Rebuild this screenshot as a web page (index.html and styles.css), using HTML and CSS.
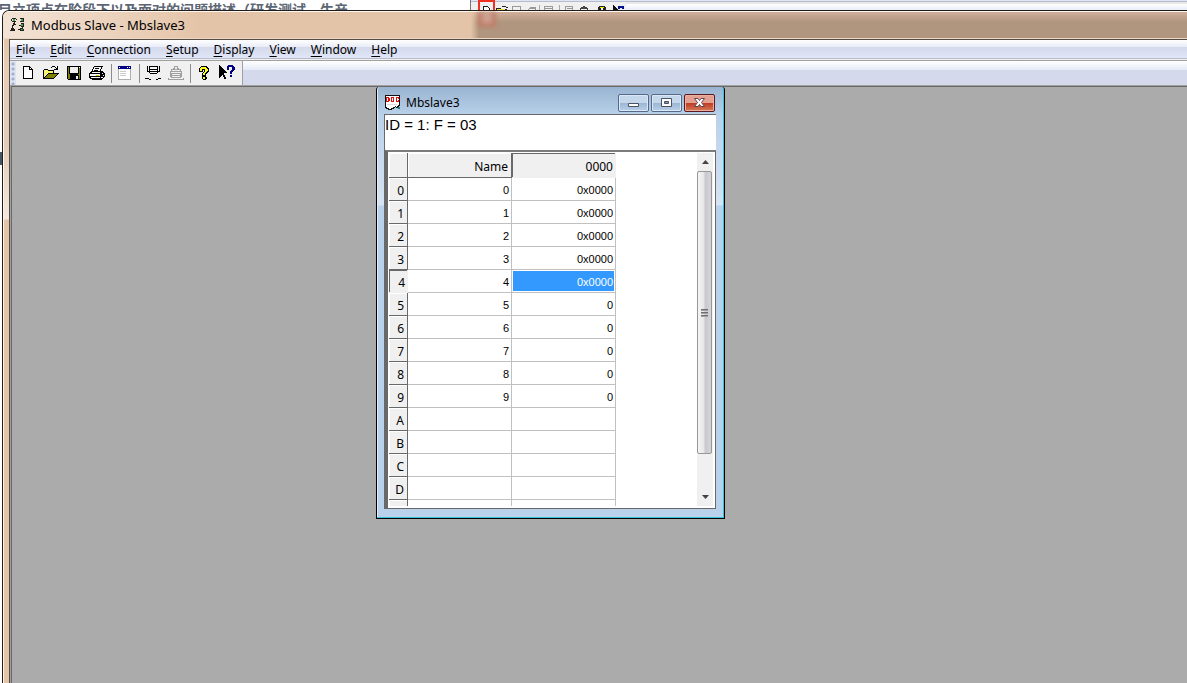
FILE: index.html
```html
<!DOCTYPE html>
<html lang="en">
<head>
<meta charset="utf-8">
<title>Modbus Slave - Mbslave3</title>
<link rel="stylesheet" href="styles.css">
</head>
<body>
<div class="desktop">
  <div class="behind" aria-hidden="true">
    <div class="behind-doc">目立项点在阶段下以及面对的问题描述（研发测试、生产</div>
    <div class="behind-app">
      <div class="behind-tools">
        <svg width="150" height="10" viewBox="0 0 150 10" shape-rendering="crispEdges">
          <path d="M9.500 10V6.500h4l2 2V10" fill="#fff" stroke="#222"/>
          <path d="M22 8h5v1h6v1H22z" fill="#222"/><path d="M23 9h8v1h-8z" fill="#e8e040"/><path d="M28 6h4v1h-4zM32 7h2v1h-2z" fill="#222"/>
          <path d="M38.500 10V6.500h8V10M54 10l3-3h5l-1 3M70.500 10V6.500h8V10M91.500 10V6.500h7V10M71 8.500h7M93 8.500h5M56 8.500h6" fill="none" stroke="#999"/>
          <path d="M65.500 5v5M85.500 5v5" stroke="#aaa"/>
          <path d="M109 6h2v1h2v1h1v2h-1V9h-6v1h-1V8h1V7h2z" fill="#444"/>
          <path d="M125 6h6v1h1v3h-3V8h-2v2h-3V7h1z" fill="#222"/><path d="M126 7h4v1h-4z" fill="#ee0"/>
          <path d="M139 5l6 5h-6z" fill="#111"/><path d="M144 6h6v3h-2V8h-2v1h-2z" fill="#00108a"/>
        </svg>
      </div>
    </div>
    <span class="behind-mark"></span>
    <span class="behind-side"></span>
  </div>

  <div class="app">
    <header class="app-title">
      <span class="glass-right"></span><span class="glass-mark"></span>
      <svg class="app-icon" width="16" height="16" viewBox="0 0 16 16" shape-rendering="crispEdges">
        <path d="M2 1h4v1H2zM2 4h4v1H2zM1 2h1v2H1zM6 2h1v1h3V1h4v1h-4v2h4v1h-4V3H6zM13 2h1v2h-1zM4 5h1v2h1v1H4v1H3v2h1v1h1v2H0v-1h1v-2h1V8h1V6h1zM11 6h3v1h-3zM11 9h3v1h-3zM13 7h1v2h-1zM9 8h2v1H9zM12 10h1v2h1v2h-4v-1H8v-1h2v-1h2z" fill="#222"/>
        <path d="M3 2h2v2H3zM11 2h2v2h-2zM11 7h2v2h-2zM11 12h2v1h-2z" fill="#3aa04a"/>
      </svg>
      <h1>Modbus Slave - Mbslave3</h1>
    </header>

    <div class="app-body">
      <nav class="menu">
        <button><u>F</u>ile</button><button><u>E</u>dit</button><button><u>C</u>onnection</button><button><u>S</u>etup</button><button><u>D</u>isplay</button><button><u>V</u>iew</button><button><u>W</u>indow</button><button><u>H</u>elp</button>
      </nav>

      <div class="toolbar">
        <div class="tools">
          <span class="grip"></span>
          <button aria-label="New"><svg width="16" height="16" viewBox="0 0 16 16" shape-rendering="crispEdges"><path d="M3 1h7v1h1v1h1v1h1v10H3z" fill="#000"/><path d="M4 2h5v3h3v8H4zM10 3h1v1h-1z" fill="#fff"/></svg></button>
          <button aria-label="Open"><svg width="16" height="16" viewBox="0 0 16 16" shape-rendering="crispEdges"><path d="M9 1h3v1H9zM8 2h1v1H8zM12 2h1v1h-1zM14 1h1v4h-4V4h2V3h1zM1 4h4v1H1zM0 5h1v9H0zM5 5h6v1H5zM10 6h1v2h-1zM5 8h11v1h-1v1h-1v1h-1v1h-1v1h-1v1H0v-1h1v-1h1v-1h1v-1h1V9h1z" fill="#000"/><path d="M1 5h4v1h5v2H4v1H3v1H2v1H1z" fill="#f7f36a"/><path d="M5 9h9v1h-1v1h-1v1h-1v1H2v-1h1v-1h1v-1h1z" fill="#808000"/></svg></button>
          <button aria-label="Save"><svg width="16" height="16" viewBox="0 0 16 16" shape-rendering="crispEdges"><path d="M1 1h14v14H2v-1H1z" fill="#000"/><path d="M2 2h1v7h1v1h8V9h1V3h1v11h-1v-4H4v4H2z" fill="#808000"/><path d="M4 2h8v6H4zM10 11h2v3h-2zM13 2h1v1h-1z" fill="#f0f0f0"/></svg></button>
          <button aria-label="Print"><svg width="16" height="16" viewBox="0 0 16 16" shape-rendering="crispEdges"><path d="M5 1h9v1h-1v2h-1v2h2v1h1v1h1v4h-1v1h-1v1h-1v1H3v-1H1v-1H0V8h1V7h1V6h1V4h1V2h1z" fill="#000"/><path d="M6 2h6v2h-1v2H4V4h1V2zM3 7h8v1H2zM1 9h10v2H1zM2 12h9v1H2zM13 8h1v1h-1zM14 10h1v1h-1zM12 12h2v1h-2z" fill="#f5f5f5"/><path d="M6 3h4v1H6zM5 5h4v1H5z" fill="#000"/><path d="M7 10h3v1H7z" fill="#d8d800"/></svg></button>
          <span class="sep"></span>
          <button aria-label="Window"><svg width="16" height="16" viewBox="0 0 16 16" shape-rendering="crispEdges"><path d="M1 1h13v14H1z" fill="#b0b0b0"/><path d="M2 4h11v10H2z" fill="#fff"/><path d="M1 1h13v3H1z" fill="#000080"/><path d="M2 2h1v1H2zM10 2h1v1h-1zM12 2h1v1h-1z" fill="#fff"/><path d="M3 6h6v1H3zM3 8h6v1H3zM3 10h6v1H3z" fill="#ccc"/></svg></button>
          <span class="sep"></span>
          <button aria-label="Connect"><svg width="16" height="16" viewBox="0 0 16 16" shape-rendering="crispEdges"><path d="M2 1h1v5h1V1h9v5h1V1h1v6h-2v1h-1v1H5V8H4V7H2zM0 13h4v1H0zM4 14h2v1H4zM11 14h2v-1h3v1h-3v1h-2z" fill="#000"/><path d="M5 2h7v2H5zM5 5h7v1H5zM5 7h7v1H5z" fill="#f8f8f8"/></svg></button>
          <button aria-label="Disconnect" disabled><svg width="16" height="16" viewBox="0 0 16 16" shape-rendering="crispEdges"><path d="M6 1h4v2h1v1h2v2h1v6h-1v1h3v2H0v-2h3v-1H2V6h1V4h2V3h1z" fill="#a0a0a0"/><path d="M7 2h2v2H7zM4 5h8v1H4zM3 7h10v1H3zM4 9h8v1H4zM4 11h8v1H4zM1 13h14v1H1z" fill="#f0f0f0"/></svg></button>
          <span class="sep"></span>
          <button aria-label="About"><svg width="16" height="16" viewBox="0 0 16 16" shape-rendering="crispEdges"><path d="M5 1h6v1h1v1h1v4h-1v1h-1v1h-1v2H6V8h1V7h1V5H7v2H3V3h1V2h1zM6 11h4v1h1v2h-1v1H7v-1H6z" fill="#000"/><path d="M5 2h5v1h1v1h1v2h-1v1h-1v1H9v2H7V8h1V7h1V4H6v2H4V3h1zM7 12h2v2H7z" fill="#ffff20"/></svg></button>
          <button aria-label="Context help"><svg width="16" height="16" viewBox="0 0 16 16" shape-rendering="crispEdges"><path d="M0 0h1v1h1v1h1v1h1v1h1v1h1v1h1v1h1v1H5v2h1v2h1v2H5v-2H4v-2H3v1H2v1H1v1H0z" fill="#000"/><path d="M9 0h5v1h1v1h1v3h-1v1h-1v1h-1v2h-2V6h1V5h1V2h-3v3H8V1h1zM11 10h2v2h-2z" fill="#000080"/></svg></button>
        </div>
      </div>

      <main class="mdi">
        <section class="child">
          <header class="child-title">
            <svg width="16" height="16" viewBox="0 0 16 16" shape-rendering="crispEdges"><path d="M0 0h15v11h-1v1h-1v1h-2v-1h-1v1H9v1H7v1H3v-1H1v-1H0z" fill="#111"/><path d="M1 1h13v9h-1v1h-1v1h-1v-1h-1v1H8v1H6v1H4v-1H2v-1H1z" fill="#fff"/><path d="M1 2h3v1h1v3H4v1H1zM6 2h3v5H6zM11 2h3v2h-1V3h-1v3h1V5h1v2h-3z" fill="#e01010"/><path d="M2 3h1v3H2zM7 3h1v3H7z" fill="#fff"/><path d="M2 9h10v1H2z" fill="#ddd"/><path d="M13 12h2v2h-2z" fill="#188a7a"/></svg>
            <h2>Mbslave3</h2>
            <div class="captions">
              <button aria-label="Minimize"><svg width="15" height="13" viewBox="0 0 15 13"><path d="M2.500 7.500h10v3h-10z" fill="#fff" stroke="#4c5363"/></svg></button>
              <button aria-label="Restore"><svg width="15" height="13" viewBox="0 0 15 13"><path d="M2.500 2.500h10v8h-10z" fill="#fff" stroke="#4c5363"/><path d="M5.500 5.500h4v2h-4z" fill="#7396bd" stroke="#4c5363"/></svg></button>
              <button class="close" aria-label="Close"><svg width="15" height="13" viewBox="0 0 15 13"><path d="M2.500 2.500h3.500l1.500 2 1.500-2h3.500l-3 4 3 4h-3.500l-1.500-2-1.500 2h-3.500l3-4z" fill="#fff" stroke="#5c4653"/></svg></button>
            </div>
          </header>
          <div class="client">
            <p class="status">ID = 1: F = 03</p>
            <div class="gridbox">
              <div class="gridview">
                <table>
                  <colgroup><col class="c-head"><col class="c-val"><col class="c-val"></colgroup>
                  <thead><tr><th></th><th>Name</th><th class="active">0000</th></tr></thead>
                  <tbody>
                    <tr><th>0</th><td>0</td><td>0x0000</td></tr>
                    <tr><th>1</th><td>1</td><td>0x0000</td></tr>
                    <tr><th>2</th><td>2</td><td>0x0000</td></tr>
                    <tr><th>3</th><td>3</td><td>0x0000</td></tr>
                    <tr class="current"><th>4</th><td>4</td><td class="selected">0x0000</td></tr>
                    <tr><th>5</th><td>5</td><td>0</td></tr>
                    <tr><th>6</th><td>6</td><td>0</td></tr>
                    <tr><th>7</th><td>7</td><td>0</td></tr>
                    <tr><th>8</th><td>8</td><td>0</td></tr>
                    <tr><th>9</th><td>9</td><td>0</td></tr>
                    <tr><th>A</th><td></td><td></td></tr>
                    <tr><th>B</th><td></td><td></td></tr>
                    <tr><th>C</th><td></td><td></td></tr>
                    <tr><th>D</th><td></td><td></td></tr>
                    <tr><th></th><td></td><td></td></tr>
                  </tbody>
                </table>
              </div>
              <div class="scroll">
                <button aria-label="Scroll up"><svg width="7" height="4" viewBox="0 0 7 4"><path d="M0 4l3.500-4L7 4z" fill="#444"/></svg></button>
                <div class="thumb"><i></i><i></i><i></i></div>
                <button aria-label="Scroll down"><svg width="7" height="4" viewBox="0 0 7 4"><path d="M0 0l3.500 4L7 0z" fill="#444"/></svg></button>
              </div>
            </div>
          </div>
        </section>
      </main>
    </div>
  </div>
</div>
</body>
</html>
```
FILE: styles.css
```css
* { box-sizing: border-box; }
body {
  margin: 0;
  font-family: "Noto Sans", "Noto Sans CJK SC", sans-serif;
  font-size: 12px;
  color: #000;
}
button {
  margin: 0;
  padding: 0;
  border: 0;
  background: none;
  font: inherit;
  color: inherit;
}
svg { display: block; }
h1, h2, p { margin: 0; font-weight: 400; }

.desktop {
  position: relative;
  display: flex;
  min-height: 100vh;
  padding: 10px 0 0 2px;
  background: #fff;
  overflow: hidden;
}

/* windows lying behind the application */
.behind { position: absolute; inset: 0; overflow: hidden; display: flex; }
.behind-doc {
  flex: 0 0 470px;
  height: 10px;
  line-height: 18px;
  overflow: hidden;
  white-space: nowrap;
  font-family: "Noto Sans CJK SC", sans-serif;
  font-size: 14px;
  font-weight: 700;
  color: #5c6674;
  text-indent: -2px;
}
.behind-app {
  flex: 1;
  height: 10px;
  border-left: 1px solid #777;
  background: linear-gradient(#dfe5f5 0 1px, #b6bccc 1px 2px, #e8e8e8 2px 4px, #fff 4px, #e8eef8 10px);
}
.behind-tools { width: 155px; height: 10px; background: linear-gradient(#dfe5f5 0 1px, #b6bccc 1px 2px, #f0f0f0 2px); padding-left: 3px; }
.behind-mark {
  position: absolute;
  left: 478px;
  top: 0;
  width: 17px;
  height: 24px;
  border: 2px solid #f03020;
}
.behind-side { position: absolute; left: 0; top: 152px; width: 2px; height: 13px; background: #456; }

/* application frame */
.app {
  position: relative;
  flex: 1;
  display: flex;
  flex-direction: column;
  border: solid #221c18;
  border-width: 1px 0 0 1px;
  border-radius: 7px 0 0 0;
  background: linear-gradient(#e4c4a8 0 24px, #e8cdb8 60px, #e2cbb8 130px, #f3e8df 208px, #e4c4a8 209px);
  box-shadow: inset 1px 1px 0 #fff8f0;
  overflow: hidden;
}
.app-title {
  position: relative;
  display: flex;
  align-items: center;
  gap: 5px;
  height: 28px;
  padding-left: 7px;
  background: linear-gradient(90deg, #f3e3d5, #e4c4a8 200px, #e4c4a8);
  border-top: 1px solid #fff8f0;
  border-bottom: 1px solid #ead7c6;
}
.glass-right {
  position: absolute;
  inset: 0 0 0 468px;
  background: linear-gradient(#d0b09c, #b0967e 10px);
  -webkit-mask-image: linear-gradient(90deg, transparent, #000 8px);
  mask-image: linear-gradient(90deg, transparent, #000 8px);
}
.glass-mark {
  position: absolute;
  left: 475px;
  top: 0;
  width: 18px;
  height: 15px;
  border: 4px solid #c07c68;
  border-top: 0;
  background: #cca090;
  filter: blur(2px);
}
h1 { font-size: 13px; line-height: 24px; }
.app-body {
  flex: 1;
  display: flex;
  flex-direction: column;
  margin-left: 6px;
  border: solid #574c42;
  border-width: 1px 0 0 1px;
}

.menu {
  display: flex;
  gap: 3px;
  height: 21px;
  background: linear-gradient(#fff, #e8ecf7 7px, #d4d9ec 7px, #e0e6f7 18px, #b6bccc 18px 19px, #f0f0f0 19px 20px, #a0a0a0 20px);
}
.menu button { padding: 0 6px; height: 19px; line-height: 19px; }
.menu u { text-underline-offset: 2px; }

.toolbar {
  display: flex;
  height: 24px;
  background: linear-gradient(#fff, #e4ebf7 9px, #d4d9ec 9px);
}
.tools {
  display: flex;
  align-items: center;
  background: #f0f0f0;
  border-right: 1px solid #a0a0a0;
  padding-right: 4px;
}
.tools button { width: 23px; display: grid; place-items: center; }
.grip {
  align-self: stretch;
  width: 6px;
  background: radial-gradient(circle at 3px 3px, #a4aec4 1px, transparent 2px) 0 0 / 6px 5px, #dde3f3;
}
.sep { width: 1px; height: 19px; margin: 0 1px 0 3px; background: #8c8c8c; }

.mdi {
  position: relative;
  flex: 1;
  border: solid #696969;
  border-width: 1px 0 0 1px;
  margin: 1px 0 0 1px;
  background: #ababab;
  min-height: 440px;
  box-shadow: 0 0 0 1px #a0a0a0;
}

/* document window on the MDI canvas */
.child {
  position: absolute;
  left: 364px;
  top: 0;
  width: 349px;
  padding: 0 8px 8px 7px;
  border: 1px solid #000;
  border-top: 0;
  border-radius: 3px 3px 0 0;
  background: linear-gradient(#99b4d1, #b9d1ea 28px, #d7e4f3 118px, #b9d1ea 119px);
  box-shadow: inset -1px -1px 0 #35c4dc, inset 1px 0 0 #e4eef8;
}
.child-title { display: flex; align-items: center; gap: 5px; height: 27px; padding: 4px 1px 0 1px; }
h2 { flex: 1; font-size: 12px; line-height: 18px; }
.captions { display: flex; gap: 2px; }
.captions button {
  display: grid;
  place-items: center;
  width: 31px;
  height: 18px;
  border: 1px solid #56698a;
  border-radius: 2px;
  background: linear-gradient(#c5d7ea 0 8px, #9ab6d4 8px, #b9d1ea);
  box-shadow: inset 0 0 0 1px #dce8f4;
}
.captions .close {
  border-color: #5a1820;
  background: linear-gradient(#e4a090 0 8px, #bf3a22 8px, #d67a58);
  box-shadow: inset 0 0 0 1px #eab0a0;
}
.client { border: solid #696969; border-width: 1px 0 0 1px; background: #fff; }
.status {
  height: 35px;
  font-family: "Liberation Sans", Arial, sans-serif;
  font-size: 15px;
  line-height: 20px;
}
.gridbox {
  display: flex;
  height: 359px;
  margin-bottom: 1px;
  border: 1px solid #696969;
  border-width: 2px 1px 1px 3px;
  padding: 1px 2px 2px 1px;
  border-top-color: #7c7c7c;
}
.gridview { flex: 1; overflow: hidden; }
table { table-layout: fixed; border-collapse: separate; border-spacing: 0; width: 227px; }
.c-head { width: 19px; }
.c-val { width: 104px; }
th, td { height: 23px; padding: 2px 2px 0 0; text-align: right; font-weight: 400; line-height: 20px; }
th {
  padding: 3px 3px 0 0;
  line-height: 19px;
  font-size: 12px;
  background: #f0f0f0;
  border: solid #696969;
  border-width: 0 1px 1px 0;
  box-shadow: inset 1px 1px 0 #fff;
}
thead th { height: 25px; }
thead th.active { border-color: #f0f0f0; box-shadow: inset 1px 1px 0 #696969; padding-right: 2px; }
td {
  font-family: "Liberation Sans", Arial, sans-serif;
  font-size: 11px;
  border: solid #c0c0c0;
  border-width: 0 1px 1px 0;
}
.current th { border-color: #f0f0f0; box-shadow: inset 1px 1px 0 #696969; padding-right: 2px; }
td.selected { background: #39f; color: #fff; box-shadow: inset 0 0 0 1px #fff; }

.scroll { display: flex; flex-direction: column; width: 16px; background: #f0f0f0; }
.scroll button { height: 18px; display: grid; place-items: center; }
.scroll button:last-child { margin-top: auto; }
.thumb {
  flex: 0 0 283px;
  display: flex;
  flex-direction: column;
  align-items: center;
  justify-content: center;
  gap: 1px;
  width: 15px;
  border: 1px solid #979797;
  border-radius: 2px;
  background: linear-gradient(90deg, #f5f5f5, #e6e6e8 45%, #c8c8ce 55%, #d4d4d8);
}
.thumb i { width: 7px; height: 2px; background: linear-gradient(#555, #bbb); }
```
